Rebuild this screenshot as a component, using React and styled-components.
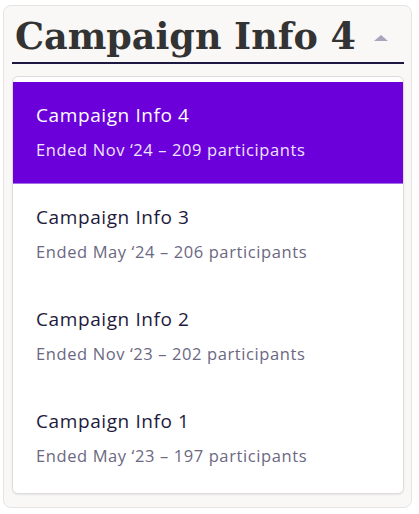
import styled, { createGlobalStyle } from "styled-components";

const GlobalStyle = createGlobalStyle`
  body {
    margin: 0;
    background: #ffffff;
  }
`;

export const Card = styled.div`
  box-sizing: border-box;
  width: 409px;
  height: 503px;
  margin: 5px 0 0 3px;
  padding: 0 7px 0 8px;
  background: #f9f8f7;
  border: 1px solid #e6e4e2;
  border-radius: 8px;
  display: flex;
  flex-direction: column;
`;

export const Header = styled.div`
  height: 56px;
  display: flex;
  align-items: flex-end;
  justify-content: space-between;
  border-bottom: 2px solid #1c1842;
  padding: 0 16px 0 3px;
`;

export const Title = styled.h1`
  margin: 0 0 1px 0;
  font-family: "DejaVu Serif", serif;
  font-weight: 700;
  font-size: 36.5px;
  line-height: 48px;
  white-space: nowrap;
  color: #333333;
`;

export const Caret = styled.span`
  width: 0;
  height: 0;
  border-left: 7px solid transparent;
  border-right: 7px solid transparent;
  border-bottom: 6px solid #a9a5bd;
  margin-bottom: 21px;
`;

export const Panel = styled.ul`
  list-style: none;
  margin: 12px 0 0 0;
  padding: 5px 0 3px 0;
  background: #ffffff;
  border: 1px solid #dedcdc;
  border-radius: 6px;
  box-shadow: 0 1px 2px rgba(0, 0, 0, 0.08);
`;

export const Option = styled.li`
  height: 102px;
  box-sizing: border-box;
  padding: 22px 23px;
  display: flex;
  flex-direction: column;
  gap: 13px;
  border-bottom: 1px solid ${(p) => (p.$active ? "#a46ee8" : "transparent")};
  background: ${(p) => (p.$active ? "#6c00da" : "#ffffff")};
  font-family: "Open Sans", "Liberation Sans", sans-serif;
`;

export const OptionName = styled.span`
  font-size: 19px;
  line-height: 22px;
  letter-spacing: 0.6px;
  color: ${(p) => (p.$active ? "#ffffff" : "#1e1a3c")};
`;

export const OptionMeta = styled.span`
  font-size: 16.5px;
  line-height: 22px;
  letter-spacing: 0.6px;
  color: ${(p) => (p.$active ? "#eee4ff" : "#6b6882")};
`;

const campaigns = [
  { name: "Campaign Info 4", meta: "Ended Nov ‘24 – 209 participants" },
  { name: "Campaign Info 3", meta: "Ended May ‘24 – 206 participants" },
  { name: "Campaign Info 2", meta: "Ended Nov ‘23 – 202 participants" },
  { name: "Campaign Info 1", meta: "Ended May ‘23 – 197 participants" },
];

export default function App() {
  return (
    <>
      <GlobalStyle />
      <Card>
        <Header>
          <Title>Campaign Info 4</Title>
          <Caret />
        </Header>
        <Panel>
          {campaigns.map((c, i) => (
            <Option key={c.name} $active={i === 0}>
              <OptionName $active={i === 0}>{c.name}</OptionName>
              <OptionMeta $active={i === 0}>{c.meta}</OptionMeta>
            </Option>
          ))}
        </Panel>
      </Card>
    </>
  );
}
